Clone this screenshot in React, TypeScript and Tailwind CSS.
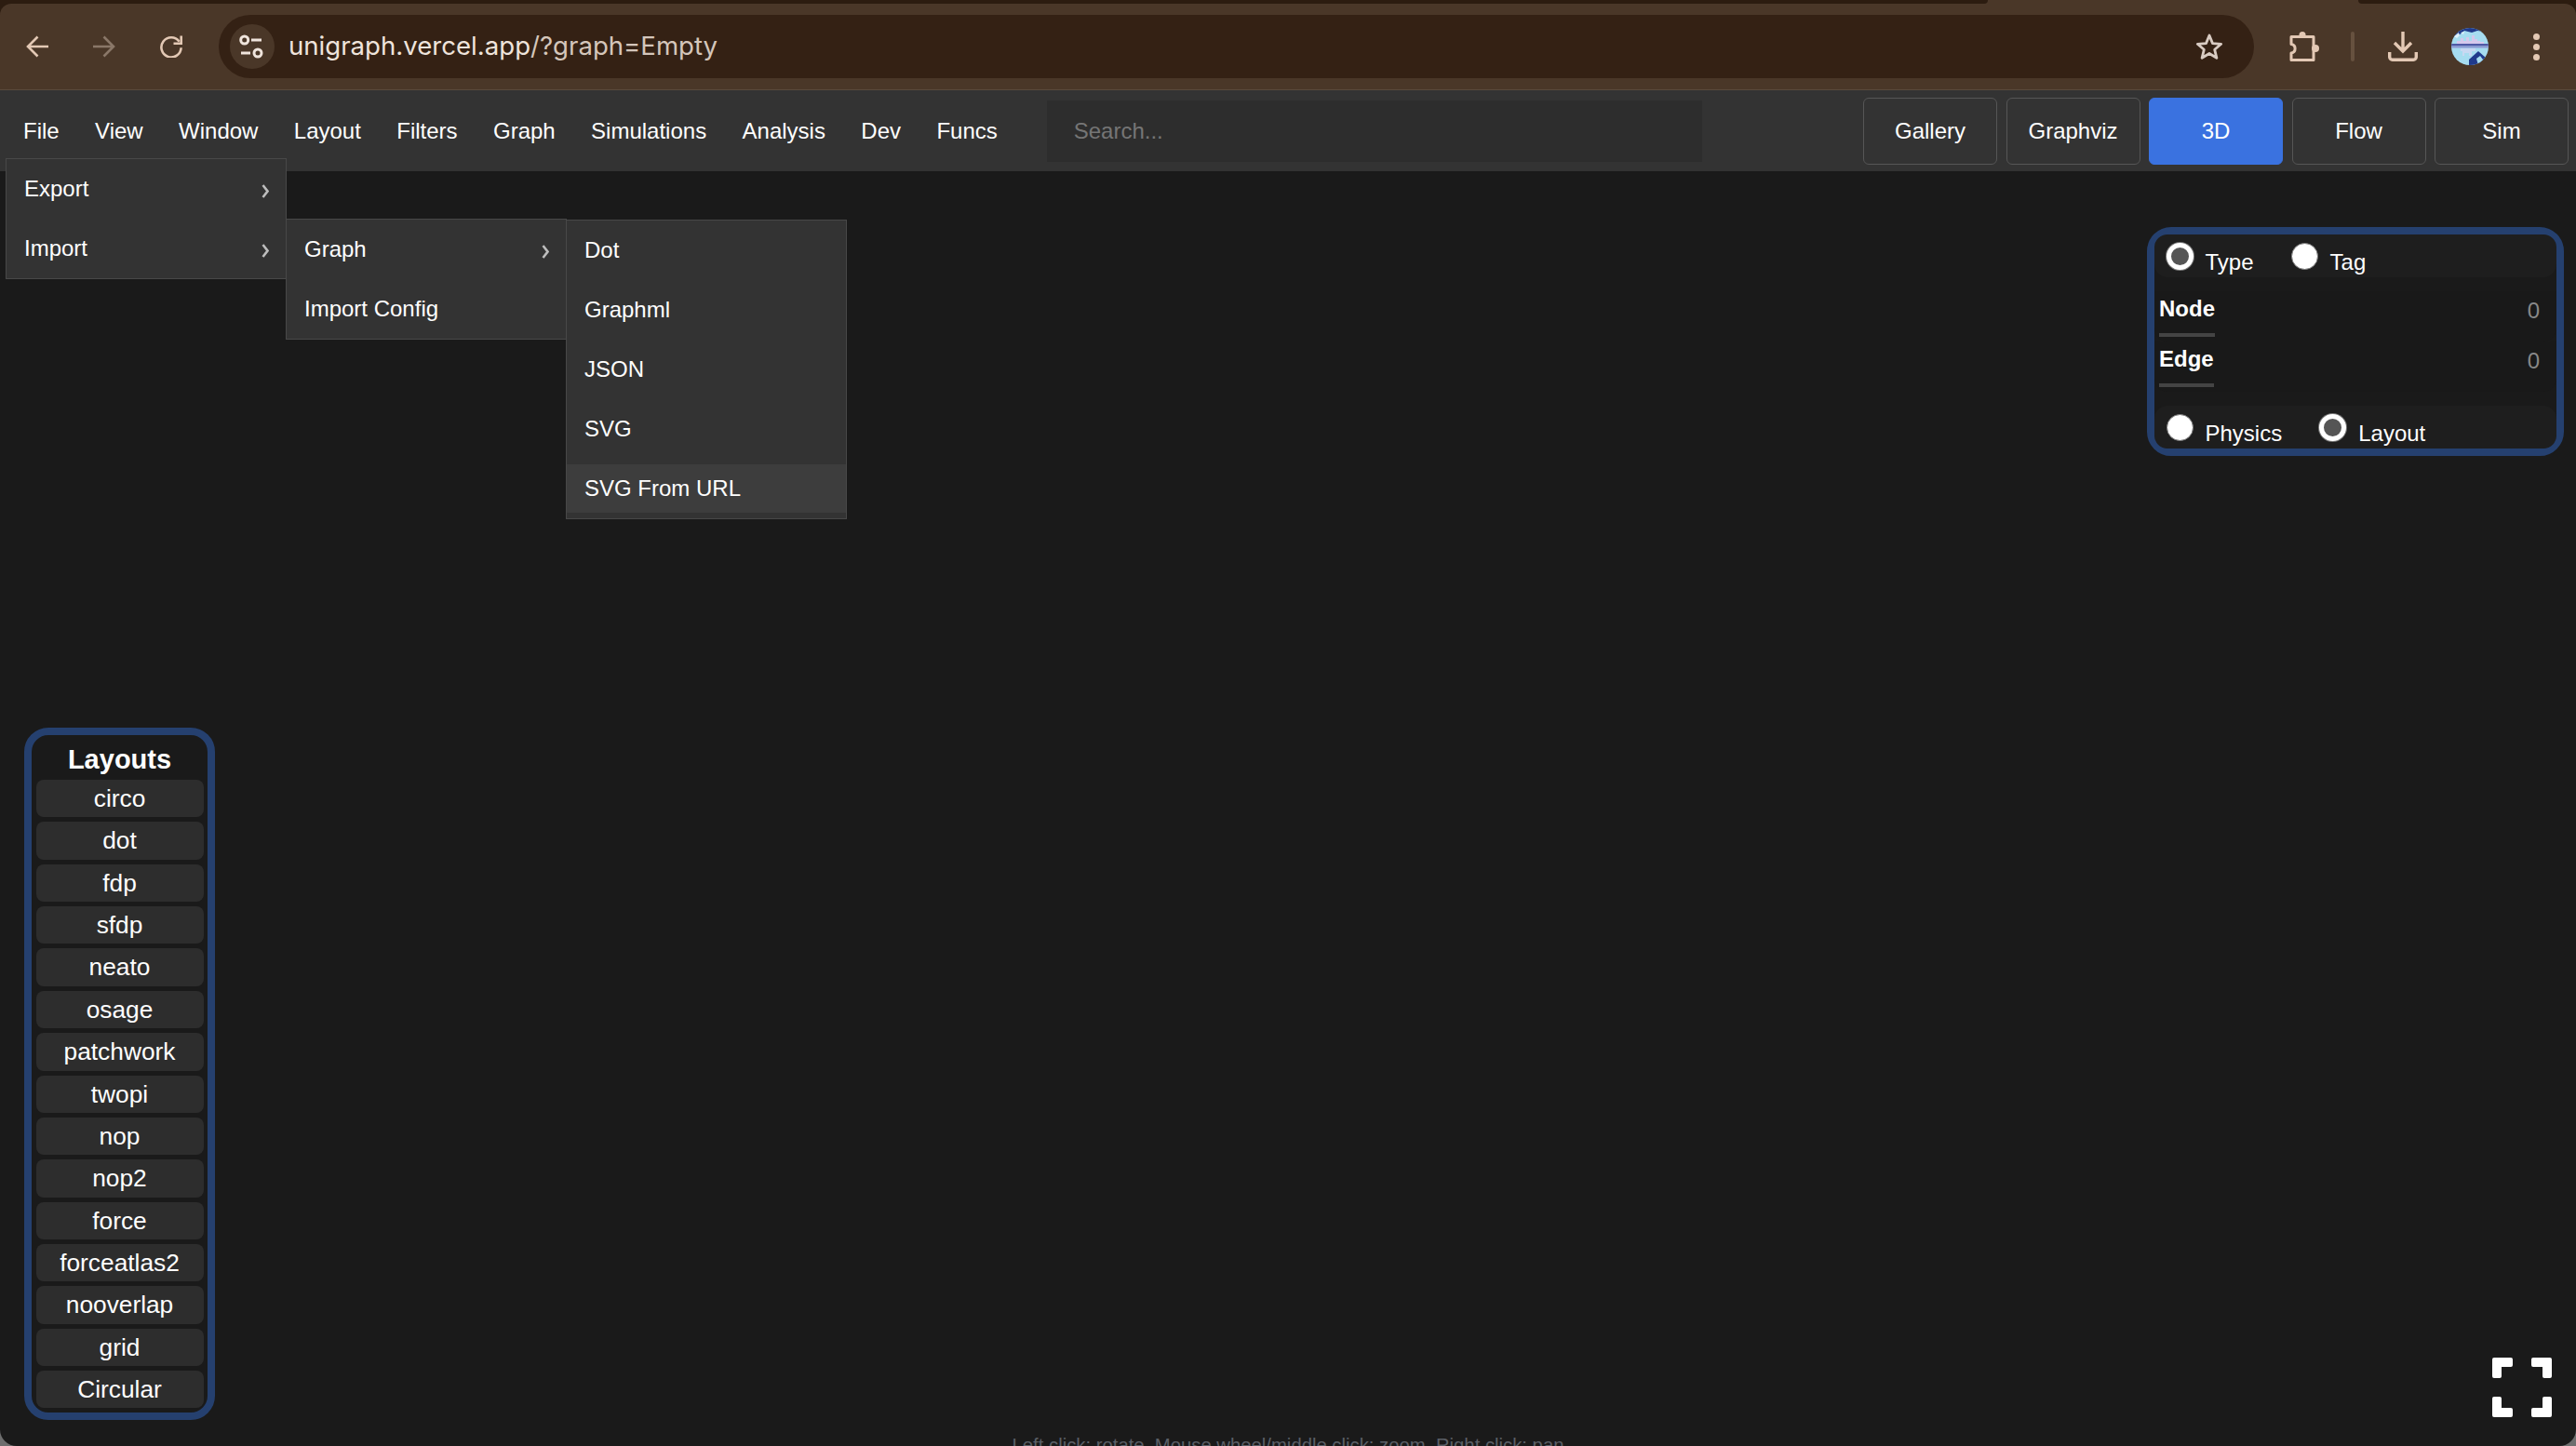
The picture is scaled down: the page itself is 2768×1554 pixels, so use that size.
const menus = ['File', 'View', 'Window', 'Layout', 'Filters', 'Graph', 'Simulations', 'Analysis', 'Dev', 'Funcs'];
const views = ['Gallery', 'Graphviz', '3D', 'Flow', 'Sim'];
const layouts = ['circo', 'dot', 'fdp', 'sfdp', 'neato', 'osage', 'patchwork', 'twopi', 'nop', 'nop2', 'force', 'forceatlas2', 'nooverlap', 'grid', 'Circular'];

function BackIcon({ className }: { className: string }) {
  return (
    <svg width="24" height="24" viewBox="0 0 24 24" fill="none" stroke="currentColor" strokeWidth="2.6" className={className}>
      <path d="M24 12H2M12.5 1.5 2 12l10.5 10.5" />
    </svg>
  );
}

function ReloadIcon() {
  return (
    <svg width="24" height="24" viewBox="0 0 24 24" fill="none" stroke="currentColor" strokeWidth="2.6" className="text-[#e3c8b4]">
      <path d="M20.600 6.700A10.600 10.600 0 1 0 22.600 13.300" />
      <path d="M22.700 0.500V8.700H14.500" />
    </svg>
  );
}

function SiteIcon() {
  return (
    <svg width="48" height="48" viewBox="0 0 48 48" fill="none" stroke="#efe4dc" strokeWidth="3" className="shrink-0 rounded-full bg-[#4a3728]">
      <circle cx="15.7" cy="17" r="4" />
      <path d="M23 17h11M12 31h10" />
      <circle cx="30" cy="31" r="4" />
    </svg>
  );
}

function StarIcon() {
  return (
    <svg width="30" height="30" viewBox="0 0 30 30" fill="none" stroke="#d8cbc2" strokeWidth="2.8" strokeLinejoin="round">
      <path d="M15 3l3.5 8.6 9.2.7-7 6 2.2 9L15 22.5 7.100 27.300l2.200-9-7-6 9.200-.7z" />
    </svg>
  );
}

function PuzzleIcon() {
  return (
    <svg width="32" height="32" viewBox="0 0 32 32" fill="none" stroke="#e3c8b4" strokeWidth="3" strokeLinejoin="round">
      <path d="M2 5.500H26V30.500H2V23a4.800 4.800 0 0 0 0-9.500z" />
      <circle cx="14" cy="3.500" r="3.500" fill="#e3c8b4" stroke="none" />
      <circle cx="28" cy="18" r="4" fill="#e3c8b4" stroke="none" />
    </svg>
  );
}

function DownloadIcon() {
  return (
    <svg width="32" height="32" viewBox="0 0 32 32" fill="none" stroke="#e3c8b4" strokeWidth="3.400">
      <path d="M16 0V21M7 12l9 9 9-9" />
      <path d="M1.700 22v5.300a3 3 0 0 0 3 3H27.300a3 3 0 0 0 3-3V22" />
    </svg>
  );
}

function Avatar() {
  return (
    <svg width="40" height="40" viewBox="0 0 40 40" className="shrink-0 rounded-full">
      <rect width="40" height="40" fill="#a6dcf0" />
      <path d="M4 0H36V4L28 3 22 5 14 3 8 8 2 9z" fill="#1f3a8c" />
      <path d="M3 9l5-4 1 3-3 3zM10 5l4-1-1 3z" fill="#dff2fa" />
      <path d="M6 18v-4h4v-3h3v3h3v-4h3v4h3V8h3v4h3v2h3v1h4v3z" fill="#d5c8ec" />
      <rect y="17" width="40" height="2.500" fill="#4f5aa6" />
      <rect y="19.500" width="40" height="2" fill="#8d98d2" />
      <path d="M10 22h16v3h-4v5h-3v-3h-5v3h-2v-5h-2z" fill="#c8d8f2" />
      <path d="M19 40V34L29 25l8 7 3 8z" fill="#1f3a8c" />
      <path d="M27 33l4-3 3 4-2 6h-3z" fill="#a6dcf0" />
    </svg>
  );
}

function Dots() {
  return (
    <div className="flex w-[8px] flex-col gap-[4px]">
      <span className="h-[7px] w-[7px] rounded-full bg-[#e3c8b4]" />
      <span className="h-[7px] w-[7px] rounded-full bg-[#e3c8b4]" />
      <span className="h-[7px] w-[7px] rounded-full bg-[#e3c8b4]" />
    </div>
  );
}

function BrowserBar() {
  return (
    <div className="bg-[#2c1c10]">
      <div className="flex h-[4px] bg-[#4a3728]">
        <div className="w-[2136px] rounded-br-[8px] bg-[#2c1c10]" />
        <div className="flex-1" />
        <div className="w-[234px] rounded-bl-[8px] bg-[#2c1c10]" />
      </div>
      <div className="flex h-[93px] items-center rounded-t-[12px] border-b border-[#5a4a3d] bg-[#4a3728] pl-[28px]">
        <BackIcon className="text-[#e3c8b4]" />
        <BackIcon className="ml-[48px] rotate-180 text-[#8a7768]" />
        <div className="ml-[48px]">
          <ReloadIcon />
        </div>
        <div className="ml-[39px] flex h-[68px] w-[2187px] items-center rounded-full bg-[#342114] pl-[12px] pr-[33px]">
          <SiteIcon />
          <span className="ml-[15px] font-['Inter',sans-serif] text-[27.600px] text-[#efe4dc]">
            unigraph.vercel.app<span className="text-[#d4c6bb]">/?graph=Empty</span>
          </span>
          <div className="ml-auto">
            <StarIcon />
          </div>
        </div>
        <div className="ml-[38px]">
          <PuzzleIcon />
        </div>
        <div className="ml-[34px] h-[32px] w-[3.500px] rounded-full bg-[#66513f]" />
        <div className="ml-[36px]">
          <DownloadIcon />
        </div>
        <div className="ml-[36px]">
          <Avatar />
        </div>
        <div className="ml-[48px]">
          <Dots />
        </div>
      </div>
    </div>
  );
}

function MenuBar() {
  return (
    <div className="flex h-[87px] items-center bg-[#333333] pl-[25px] pr-[8px] text-[24px] text-white">
      <div className="flex gap-[38.400px]">
        {menus.map((m) => (
          <span key={m}>{m}</span>
        ))}
      </div>
      <input
        readOnly
        placeholder="Search..."
        className="ml-[53px] h-[66px] w-[704px] bg-[#2d2d2d] pl-[29px] text-[24px] text-white outline-none placeholder:text-[#757575]"
      />
      <div className="ml-auto flex gap-[9.500px]">
        {views.map((v) => (
          <button
            key={v}
            className={
              v === '3D'
                ? 'h-[72px] w-[144px] rounded-[6px] border border-[#3a72e0] bg-[#3a72e0] text-white'
                : 'h-[72px] w-[144px] rounded-[6px] border-[1.500px] border-[#565656] bg-[#333333] text-white'
            }
          >
            {v}
          </button>
        ))}
      </div>
    </div>
  );
}

function Chevron() {
  return (
    <svg width="8" height="15" viewBox="0 0 8 15" fill="none" stroke="#bdbdbd" strokeWidth="2.600" className="mt-[4px]">
      <path d="M1.500 1l5 6.500-5 6.500" />
    </svg>
  );
}

function MenuItem({ label, arrow, active }: { label: string; arrow?: boolean; active?: boolean }) {
  return (
    <div className={active ? 'flex h-[52px] items-center justify-between bg-[#3d3d3d] pl-[19px] pr-[18px]' : 'flex h-[52px] items-center justify-between pl-[19px] pr-[18px]'}>
      <span>{label}</span>
      {arrow && <Chevron />}
    </div>
  );
}

function Menus() {
  const box = 'w-[302px] flex flex-col gap-[12px] border border-[#484848] bg-[#333333] py-[6px] text-[24px] text-white';
  return (
    <div className={`absolute left-[6px] top-[-14px] z-20 ${box}`}>
      <MenuItem label="Export" arrow />
      <MenuItem label="Import" arrow />
      <div className={`absolute left-[300px] top-[64px] ${box}`}>
        <MenuItem label="Graph" arrow />
        <MenuItem label="Import Config" />
        <div className={`absolute left-[300px] top-[0px] ${box}`}>
          <MenuItem label="Dot" />
          <MenuItem label="Graphml" />
          <MenuItem label="JSON" />
          <MenuItem label="SVG" />
          <MenuItem label="SVG From URL" active />
        </div>
      </div>
    </div>
  );
}

function Radio({ checked }: { checked?: boolean }) {
  return (
    <input
      type="radio"
      readOnly
      checked={!!checked}
      className={
        checked
          ? 'mt-[8.500px] h-[29px] w-[29px] shrink-0 appearance-none rounded-full border-[5px] border-white bg-[#555555] shadow-[0_0_0_1px_#777777]'
          : 'mt-[8.500px] h-[29px] w-[29px] shrink-0 appearance-none rounded-full border border-[#777777] bg-white'
      }
    />
  );
}

function RadioRow({ items }: { items: { label: string; checked?: boolean }[] }) {
  return (
    <div className="flex h-[46px] items-start gap-[40px] rounded-[14px] bg-[#1e1e1e] pl-[12.500px]">
      {items.map((it) => (
        <div key={it.label} className="flex items-start gap-[13px]">
          <Radio checked={it.checked} />
          <span className="mt-[17px] text-[24px] leading-[26px] text-white">{it.label}</span>
        </div>
      ))}
    </div>
  );
}

function StatRow({ label }: { label: string }) {
  return (
    <div className="flex h-[54px] items-start justify-between rounded-b-[14px] bg-[#191919] pl-[5px] pr-[18px] pt-[6px]">
      <span className="border-b-4 border-[#444444] pb-[13px] text-[24px] font-bold leading-[26px] text-white">{label}</span>
      <span className="mt-[2px] text-[24px] leading-[26px] text-[#888888]">0</span>
    </div>
  );
}

function InfoPanel() {
  return (
    <div className="absolute right-[13px] top-[60px] w-[448px] rounded-[26px] border-8 border-[#25406f] bg-[#1a1a1a]">
      <RadioRow items={[{ label: 'Type', checked: true }, { label: 'Tag' }]} />
      <div className="py-[15px]">
        <StatRow label="Node" />
        <StatRow label="Edge" />
      </div>
      <RadioRow items={[{ label: 'Physics' }, { label: 'Layout', checked: true }]} />
    </div>
  );
}

function LayoutsPanel() {
  return (
    <div className="absolute left-[26px] top-[598px] flex w-[205px] flex-col rounded-[26px] border-8 border-[#25406f] bg-[#1a1a1a] px-[4.500px] pb-[5px] pt-[10px]">
      <div className="mb-[6px] text-center text-[29px] font-bold leading-[32px] text-white">Layouts</div>
      <div className="flex flex-col gap-[5px]">
        {layouts.map((l) => (
          <button key={l} className="h-[40.360px] rounded-[8px] bg-[#2d2d2d] text-[26.300px] leading-none text-white">
            {l}
          </button>
        ))}
      </div>
    </div>
  );
}

function FullscreenIcon() {
  return (
    <svg width="64" height="64" viewBox="0 0 64 64" fill="white" stroke="white" strokeWidth="4" strokeLinejoin="round" className="absolute bottom-[31px] right-[26px]">
      <path d="M2 2H20V8H8V20H2z" />
      <path d="M44 2H62V20H56V8H44z" />
      <path d="M2 44H8V56H20V62H2z" />
      <path d="M56 44H62V62H44V56H56z" />
    </svg>
  );
}

export default function App() {
  return (
    <div className="flex h-[1554px] w-[2768px] flex-col overflow-hidden bg-[#6e6e6e] font-['Liberation_Sans',Arial,sans-serif]">
      <BrowserBar />
      <MenuBar />
      <main className="relative flex-1 rounded-b-[18px] bg-[#1a1a1a]">
        <Menus />
        <InfoPanel />
        <LayoutsPanel />
        <FullscreenIcon />
        <div className="absolute left-0 right-0 top-[1354px] text-center text-[20.300px] text-[#5a5f66]">
          Left click: rotate, Mouse wheel/middle click: zoom, Right click: pan
        </div>
      </main>
    </div>
  );
}
